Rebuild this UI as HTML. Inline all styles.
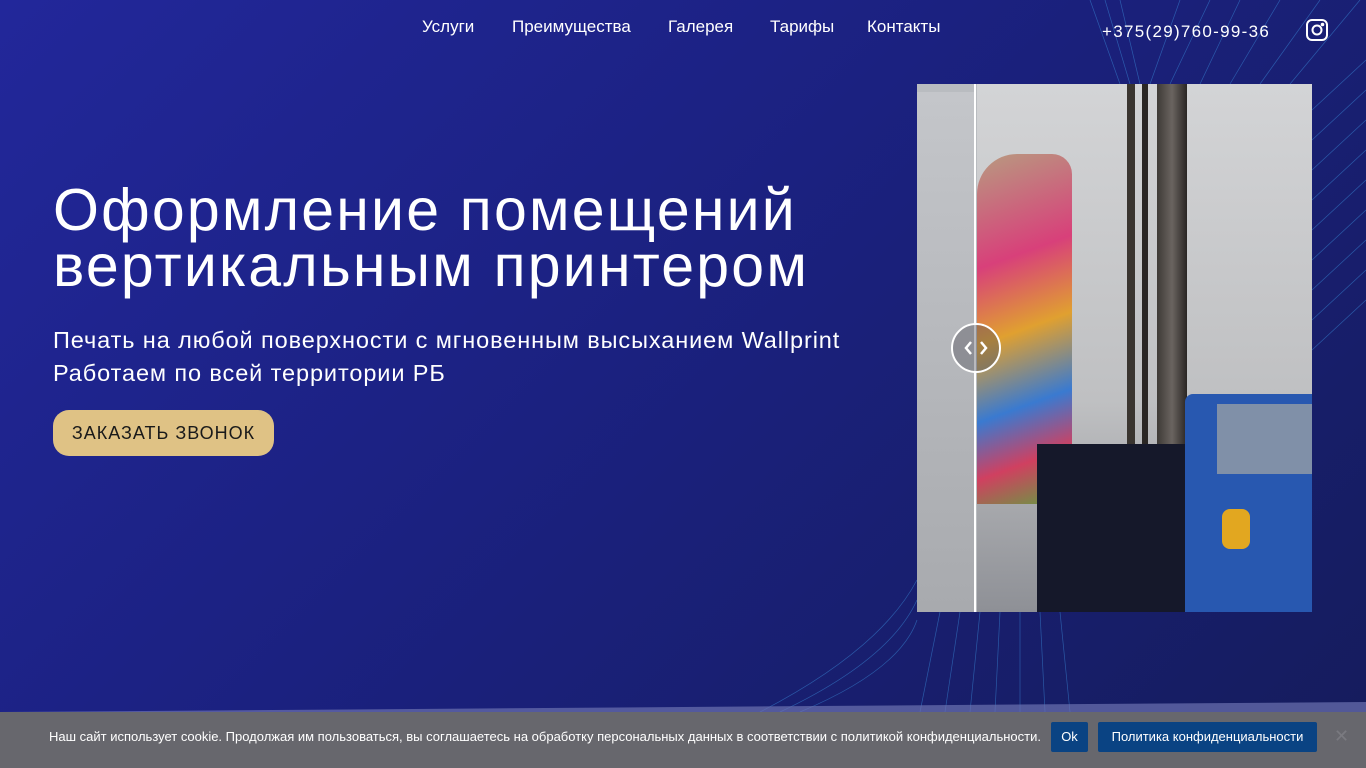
<!DOCTYPE html>
<html><head><meta charset="utf-8"><style>
*{margin:0;padding:0;box-sizing:border-box}
body{width:1366px;height:768px;overflow:hidden;font-family:"Liberation Sans",sans-serif;background:linear-gradient(135deg,#22279a 0%,#1b2180 45%,#151c5c 100%);position:relative;color:#fff}
.nav{position:absolute;top:17px;font-size:17px;color:#fff}
h1{position:absolute;left:53px;top:182px;font-size:59px;font-weight:400;line-height:56px;letter-spacing:2.2px;white-space:nowrap}
.sub{position:absolute;left:53px;top:324px;font-size:23.5px;line-height:33px;font-weight:300;letter-spacing:0.9px;white-space:nowrap}
.btn{position:absolute;left:53px;top:410px;width:221px;height:46px;border-radius:16px;background:#dfc285;color:#1a1a1a;font-size:18px;letter-spacing:1px;text-align:center;line-height:46px}
.img{position:absolute;left:917px;top:84px;width:395px;height:528px;overflow:hidden;background:#b9bcc0}
.cookie{position:absolute;left:0;top:712px;width:1366px;height:56px;background:#67676d;font-size:13px}
</style></head><body>
<svg style="position:absolute;left:0;top:0" width="1366" height="768">
<g stroke="#3a8ad8" stroke-width="0.7" opacity="0.55" fill="none">
<path d="M1090 0 L1120 84"/><path d="M1105 0 L1130 84"/><path d="M1120 0 L1140 84"/><path d="M1150 84 L1180 0"/><path d="M1170 84 L1210 0"/><path d="M1200 84 L1240 0"/><path d="M1230 84 L1280 0"/><path d="M1260 84 L1320 0"/><path d="M1290 84 L1360 0"/>
<path d="M1312 110 L1366 60"/><path d="M1312 140 L1366 90"/><path d="M1312 170 L1366 120"/><path d="M1312 200 L1366 150"/><path d="M1312 230 L1366 180"/><path d="M1312 260 L1366 210"/><path d="M1312 290 L1366 240"/><path d="M1312 320 L1366 270"/><path d="M1312 350 L1366 300"/>
<path d="M760 712 Q880 650 917 580"/><path d="M780 712 Q890 660 917 600"/><path d="M800 712 Q900 670 917 620"/>
<path d="M940 612 L920 712"/><path d="M960 612 L945 712"/><path d="M980 612 L970 712"/><path d="M1000 612 L995 712"/><path d="M1020 612 L1020 712"/><path d="M1040 612 L1045 712"/><path d="M1060 612 L1070 712"/>
</g>
<path d="M0 712 L1366 702 L1366 712 Z" fill="#6c72b0" opacity="0.7"/>
</svg>
<div class="nav" style="left:422px">Услуги</div>
<div class="nav" style="left:512px">Преимущества</div>
<div class="nav" style="left:668px">Галерея</div>
<div class="nav" style="left:770px">Тарифы</div>
<div class="nav" style="left:867px">Контакты</div>
<div class="nav" style="left:1102px;top:22px;letter-spacing:1.3px">+375(29)760-99-36</div>
<svg style="position:absolute;left:1306px;top:19px" width="22" height="22" viewBox="0 0 22 22" fill="none" stroke="#fff" stroke-width="2"><rect x="1" y="1" width="20" height="20" rx="5"/><circle cx="11" cy="11" r="4.5"/><circle cx="16.5" cy="5.5" r="0.8" fill="#fff"/></svg>
<h1>Оформление помещений<br>вертикальным принтером</h1>
<div class="sub">Печать на любой поверхности с мгновенным высыханием Wallprint<br>Работаем по всей территории РБ</div>
<div class="btn">ЗАКАЗАТЬ ЗВОНОК</div>
<div class="img">
<div style="position:absolute;left:0;top:8px;width:58px;height:520px;background:linear-gradient(#c4c6ca,#a8aaae)"></div>
<div style="position:absolute;left:60px;top:0;width:335px;height:528px;background:linear-gradient(#d3d4d6,#bfc0c2 60%,#8e9096)"></div>
<div style="position:absolute;left:60px;top:70px;width:95px;height:350px;border-radius:40px 20px 10px 0;background:linear-gradient(160deg,#b89a80,#d8407a 30%,#e0a030 50%,#3a7ad0 70%,#d04060 85%,#60a040)"></div>
<div style="position:absolute;left:210px;top:0;width:8px;height:528px;background:#3a3530"></div>
<div style="position:absolute;left:225px;top:0;width:6px;height:528px;background:#2a2624"></div>
<div style="position:absolute;left:240px;top:0;width:30px;height:528px;background:linear-gradient(90deg,#3e3a36,#6a6460,#2a2624)"></div>
<div style="position:absolute;left:120px;top:360px;width:150px;height:168px;background:#15182a"></div>
<div style="position:absolute;left:268px;top:310px;width:127px;height:218px;background:#2858b0;border-radius:8px 0 0 0"></div>
<div style="position:absolute;left:300px;top:320px;width:95px;height:70px;background:#8090a8"></div>
<div style="position:absolute;left:305px;top:425px;width:28px;height:40px;background:#e2a720;border-radius:8px"></div>
<div style="position:absolute;left:57px;top:0;width:2px;height:528px;background:#fff"></div>
<div style="position:absolute;left:34px;top:239px;width:50px;height:50px;border:2px solid #fff;border-radius:50%;background:rgba(80,80,90,0.4)"><svg width="46" height="46" viewBox="0 0 46 46" fill="none" stroke="#fff" stroke-width="2.5"><path d="M18 17 L13 23 L18 29"/><path d="M28 17 L33 23 L28 29"/></svg></div>
</div>
<div class="cookie">
<div style="position:absolute;left:49px;top:17px">Наш сайт использует cookie. Продолжая им пользоваться, вы соглашаетесь на обработку персональных данных в соответствии с политикой конфиденциальности.</div>
<div style="position:absolute;left:1051px;top:10px;width:37px;height:30px;background:#0a4383;border-radius:2px;text-align:center;line-height:30px">Ok</div>
<div style="position:absolute;left:1098px;top:10px;width:219px;height:30px;background:#0a4383;border-radius:2px;text-align:center;line-height:30px">Политика конфиденциальности</div>
<div style="position:absolute;left:1334px;top:14px;font-size:18px;color:#7a7a80">✕</div>
</div>
</body></html>
